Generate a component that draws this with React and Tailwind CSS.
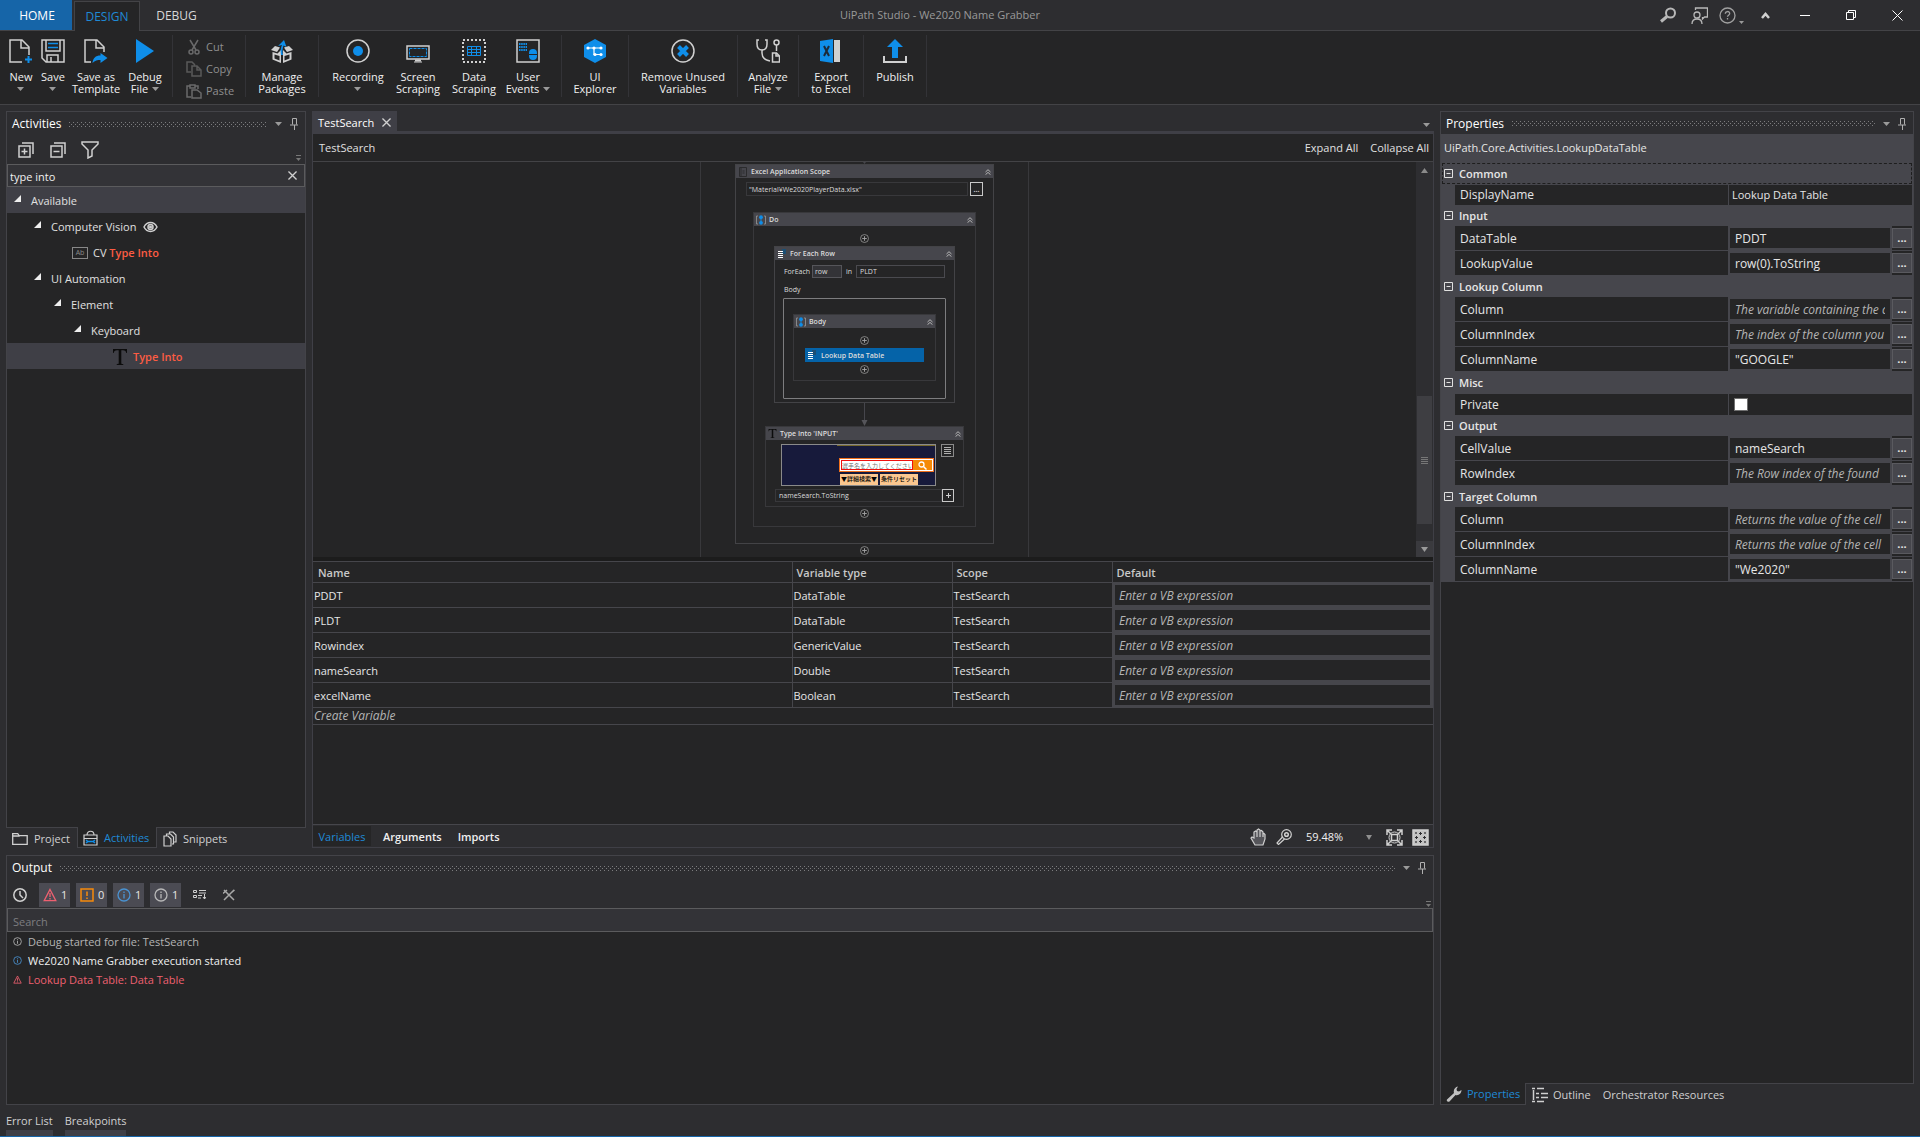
import React, { useState } from 'react';

const variables = [
  { name: 'PDDT', type: 'DataTable', scope: 'TestSearch' },
  { name: 'PLDT', type: 'DataTable', scope: 'TestSearch' },
  { name: 'Rowindex', type: 'GenericValue', scope: 'TestSearch' },
  { name: 'nameSearch', type: 'Double', scope: 'TestSearch' },
  { name: 'excelName', type: 'Boolean', scope: 'TestSearch' },
];

const propertyGroups = [
  { title: 'Common', rows: [{ name: 'DisplayName', kind: 'text', value: 'Lookup Data Table' }] },
  {
    title: 'Input',
    rows: [
      { name: 'DataTable', value: 'PDDT' },
      { name: 'LookupValue', value: 'row(0).ToString' },
    ],
  },
  {
    title: 'Lookup Column',
    rows: [
      { name: 'Column', hint: 'The variable containing the c' },
      { name: 'ColumnIndex', hint: 'The index of the column you' },
      { name: 'ColumnName', value: '"GOOGLE"' },
    ],
  },
  { title: 'Misc', rows: [{ name: 'Private', kind: 'check' }] },
  {
    title: 'Output',
    rows: [
      { name: 'CellValue', value: 'nameSearch' },
      { name: 'RowIndex', hint: 'The Row index of the found' },
    ],
  },
  {
    title: 'Target Column',
    rows: [
      { name: 'Column', hint: 'Returns the value of the cell' },
      { name: 'ColumnIndex', hint: 'Returns the value of the cell' },
      { name: 'ColumnName', value: '"We2020"' },
    ],
  },
];

/* ---------- icons ---------- */

const Svg = ({ size = 24, w, h, box, className = '', children }) => (
  <svg
    width={w ?? size}
    height={h ?? size}
    viewBox={box ?? `0 0 ${w ?? size} ${h ?? size}`}
    fill="none"
    stroke="#d0d0d0"
    strokeWidth="1.5"
    aria-hidden="true"
    className={`shrink-0 ${className}`}
  >
    {children}
  </svg>
);

const Caret = ({ className = '' }) => (
  <Svg w={7} h={4} className={className}><path d="M0 0h7L3.500 4z" fill="#9a9a9a" stroke="none" /></Svg>
);

const NewIcon = () => (
  <Svg>
    <path d="M13 23H1V1h12l7 7v8M12 1v8h8" />
    <path d="M19.500 17v7M16 20.500h7" stroke="#0f8ee9" strokeWidth="2" />
  </Svg>
);

const SaveIcon = () => (
  <Svg>
    <path d="M1 1h22v22H5l-4-4z" />
    <path d="M5 1v11h14V1" />
    <path d="M6 23v-7h11v7M10 23v-5" />
    <path d="M7 4.500h10M7 8.500h10" stroke="#0f8ee9" />
  </Svg>
);

const SaveAsIcon = () => (
  <Svg>
    <path d="M7 23H1V1h12l7 7v5M12 1v8h8" />
    <path d="M8.500 24c.5-5 3-7.500 8-7.500V14l7 5-7 5v-3c-3 0-5.500.5-8 3z" fill="#0f8ee9" stroke="none" />
  </Svg>
);

const DebugIcon = () => (
  <Svg><path d="M3 0l18 12L3 24z" fill="#0f8ee9" stroke="none" /></Svg>
);

const PackagesIcon = () => (
  <Svg>
    <path d="M1 11l4-4 5 1.500L7 13zM23 11l-4-4-5 1.500 3 4.500z" fill="#d0d0d0" stroke="none" />
    <path d="M2.500 13l5 1.500L11 11v13l-8.500-3.500zM21.500 13l-5 1.500L13 11v13l8.500-3.500z" fill="#d0d0d0" stroke="none" />
    <path d="M4.500 15.500l5 1.500v4.500l-5-2zM19.500 15.500l-5 1.500v4.500l5-2z" fill="#252526" stroke="none" />
    <path d="M11 16c-1-5 0-8 1-10L8 7l6-6 2.500 7-3-1.500c-1 3-1.500 6-.5 9.500z" fill="#0f8ee9" stroke="none" />
  </Svg>
);

const RecordIcon = () => (
  <Svg><circle cx="12" cy="12" r="11" /><circle cx="12" cy="12" r="5" fill="#0f8ee9" stroke="none" /></Svg>
);

const ScreenIcon = () => (
  <Svg>
    <rect x="1" y="7" width="22" height="13" />
    <rect x="3.500" y="9.500" width="17" height="8" stroke="#0f8ee9" strokeWidth="1" strokeDasharray="3 1" />
    <path d="M9 20.500h6v2H9z" fill="#d0d0d0" stroke="none" />
    <path d="M8 23h8" strokeWidth="1" />
  </Svg>
);

const DataIcon = () => (
  <Svg>
    <rect x="1" y="1" width="22" height="22" strokeWidth="2" strokeDasharray="2 2" />
    <path d="M5.500 7.500h13v9h-13zM5.500 10.500h13M5.500 13.500h13M9.500 7.500v9M14.500 7.500v9" stroke="#0f8ee9" strokeWidth="1" />
  </Svg>
);

const EventsIcon = () => (
  <Svg>
    <rect x="1" y="1" width="22" height="22" />
    <path d="M3 5h8M3 8h8M3 11h8" stroke="#0f8ee9" strokeWidth="2" strokeDasharray="1.500 .7" />
    <path d="M13 15v-1a4 4 0 0 1 8 0v1zM13 16h8v1a4 4 0 0 1-8 0z" fill="#0f8ee9" stroke="none" />
  </Svg>
);

const ExplorerIcon = () => (
  <Svg>
    <path d="M12 0l11 6v12l-11 6L1 18V6z" fill="#0f8ee9" stroke="none" />
    <path d="M5 9h13M11 9v6.500h7" stroke="#fff" strokeWidth="1.200" />
    <g fill="#fff" stroke="none">
      <circle cx="5" cy="9" r="1.600" /><circle cx="11" cy="9" r="1.600" /><circle cx="18" cy="9" r="1.600" />
      <circle cx="12" cy="15.500" r="1.600" /><circle cx="18" cy="15.500" r="1.600" />
    </g>
  </Svg>
);

const RemoveIcon = () => (
  <Svg><circle cx="12" cy="12" r="11" /><path d="M7.500 7.500l9 9M16.500 7.500l-9 9" stroke="#0f8ee9" strokeWidth="4" /></Svg>
);

const AnalyzeIcon = () => (
  <Svg>
    <path d="M3 1H1v4c0 4 2 6 5 6s5-2 5-6V1H9M6 11v3c0 5 3 7 8 8" />
    <circle cx="20.500" cy="3.500" r="2.500" />
    <path d="M20.500 6v6M16.500 23v-9h4l3 3v6zM20 14v3h3" />
  </Svg>
);

const ExcelIcon = () => (
  <Svg>
    <path d="M15 1h6v22h-6z" fill="#d0d0d0" stroke="none" />
    <path d="M1 2l13-2v24L1 22z" fill="#0f8ee9" stroke="none" />
    <path d="M5 7l5 10M10 7L5 17" stroke="#1c2a38" strokeWidth="2" />
  </Svg>
);

const PublishIcon = () => (
  <Svg>
    <path d="M12 0l8 8h-5v11H9V8H4z" fill="#0f8ee9" stroke="none" />
    <path d="M1 17v6h22v-6" strokeWidth="2" />
  </Svg>
);

const CutIcon = () => (
  <Svg size={16} className="opacity-40">
    <path d="M4 1l6 10M12 1L6 11" /><circle cx="5" cy="13" r="2" /><circle cx="11" cy="13" r="2" />
  </Svg>
);

const CopyIcon = () => (
  <Svg size={16} className="opacity-30">
    <path d="M5 11H1V1h5l3 3M6 5h5l4 4v6H6zM11 5v4h4" />
  </Svg>
);

const PasteIcon = () => (
  <Svg size={16} className="opacity-40">
    <path d="M5 14H1V3h3M9 3h3v3M4 2h5v3H4zM6 7h5l4 3v5H6z" />
  </Svg>
);

const PinIcon = () => (
  <Svg w={8} h={12}><path d="M2.500 6.500v-6h4v6M0 7h8M4.500 7v5" stroke="#b0b0b0" strokeWidth="1" /></Svg>
);

const CloseIcon = () => (
  <Svg size={9} box="0 0 10 10"><path d="M.5.5l9 9M9.500.5l-9 9" /></Svg>
);

const GripMenu = () => (
  <Svg w={5} h={6}><path d="M0 .5h5" stroke="#777" strokeWidth="1" /><path d="M0 3h5L2.500 6z" fill="#777" stroke="none" /></Svg>
);

const ErrorIcon = ({ size = 14 }) => (
  <Svg size={size} box="0 0 14 14">
    <path d="M7 1.500l5.800 11.200H1.200zM7 5v4M7 10v1.500" stroke="#ee6070" strokeWidth="1.300" />
  </Svg>
);

const InfoIcon = ({ size = 14, color }) => (
  <Svg size={size} box="0 0 14 14">
    <circle cx="7" cy="7" r="6" stroke={color} strokeWidth="1.300" />
    <path d="M7 3.500v1.500M7 6v4.500" stroke={color} strokeWidth="1.300" />
  </Svg>
);

const SequenceIcon = () => (
  <Svg w={10} h={10}>
    <path d="M2 1H.5v8H2M8 1h1.500v8H8" stroke="#999" strokeWidth=".8" />
    <circle cx="5" cy="2.200" r="1.900" fill="#0f8ee9" stroke="none" />
    <path d="M5 3v4" stroke="#0f8ee9" strokeWidth="1" />
    <circle cx="5" cy="7.800" r="1.900" fill="#0f8ee9" stroke="none" />
  </Svg>
);

const DataStackIcon = () => (
  <Svg w={10} h={10}>
    <path d="M5 0h4v5H5z" fill="#1c4f74" stroke="none" />
    <path d="M1 2h5v1H1zM1 4h5v1H1zM1 6h5v1H1zM1 8h5v1H1z" fill="#fff" stroke="none" />
  </Svg>
);

const TypeIcon = ({ size = 16 }) => (
  <Svg size={size} box="0 0 16 16">
    <path d="M1 0h14v4h-.7C14 2 13 1.200 11 1.200H9.300V14c0 .8.500 1.200 2 1.200V16H4.700v-.8c1.500 0 2-.4 2-1.200V1.200H5C3 1.200 2 2 1.700 4H1z" fill="#0c0c0c" stroke="none" />
  </Svg>
);

const SheetIcon = () => (
  <Svg w={10} h={10}><path d="M1.500.5h7v9h-7zM3 .5v9M4.500 4h2M4.500 6h2" stroke="#2b2b2d" strokeWidth="1" /></Svg>
);

const PlusDot = () => (
  <Svg size={9}>
    <circle cx="4.500" cy="4.500" r="4" stroke="#8a8a8a" strokeWidth=".9" />
    <path d="M4.500 2.200v4.600M2.200 4.500h4.600" stroke="#a5a5a5" strokeWidth=".9" />
  </Svg>
);

const CollapseIcon = () => (
  <Svg size={6}><path d="M.5 3L3 .7 5.500 3M.5 5.700L3 3.400l2.500 2.300" strokeWidth=".9" stroke="#c4c4c4" /></Svg>
);

/* ---------- shared parts ---------- */

const DottedGrip = ({ id }) => (
  <svg className="h-[5px] min-w-0 flex-1" aria-hidden="true">
    <defs>
      <pattern id={id} width="4" height="4" patternUnits="userSpaceOnUse">
        <rect width="1" height="1" fill="#7c7c7e" />
        <rect x="2" y="2" width="1" height="1" fill="#7c7c7e" />
      </pattern>
    </defs>
    <rect width="100%" height="5" fill={`url(#${id})`} />
  </svg>
);

const PanelTitle = ({ id, title, className = '' }) => (
  <div className={`flex shrink-0 items-center pr-[7px] pl-[5px] text-xs ${className}`}>
    <h2 className="mr-2 text-white">{title}</h2>
    <DottedGrip id={id} />
    <button aria-label={`${title} menu`} className="ml-2"><Caret /></button>
    <button aria-label={`Pin ${title}`} className="ml-2"><PinIcon /></button>
  </div>
);

const RibbonButton = ({ icon, lines, caret, className }) => (
  <button className={`flex flex-col items-center text-[#f0f0f0] ${className}`}>
    {icon}
    <span className="mt-2 flex flex-col items-center leading-[12px] whitespace-nowrap">
      <span>{lines[0]}</span>
      {(lines[1] || caret) && (
        <span className="flex h-3 items-center gap-1">
          {lines[1]}
          {caret && <Caret />}
        </span>
      )}
    </span>
  </button>
);

const RibbonGroup = ({ className = '', children }) => (
  <div className={`mt-1 flex h-[62px] border-r border-[#333337] pt-1 ${className}`}>{children}</div>
);

/* ---------- title bar + ribbon ---------- */

const TitleBar = () => (
  <header className="relative flex h-[30px] shrink-0 items-stretch text-xs">
    <nav className="flex">
      <button className="w-[72px] bg-[#1665a8] pt-px pl-[2px] text-white">HOME</button>
      <button className="relative z-10 mt-px -mb-px ml-[2px] w-[66px] border border-b-0 border-[#434346] bg-[#252526] text-[#1f8ad6]">DESIGN</button>
      <button className="mt-px w-[72px] pt-px pl-px text-[#d8d8d8]">DEBUG</button>
    </nav>
    <h1 className="flex flex-1 items-center justify-center pt-px pl-2 text-[11px] text-[#999999]">UiPath Studio - We2020 Name Grabber</h1>
    <div className="flex w-[260px] items-center">
      <button aria-label="Search">
        <Svg size={17}><circle cx="10.500" cy="6" r="4.500" strokeWidth="2" stroke="#b8b8b8" /><path d="M7 9.500L1 14.500" strokeWidth="3" stroke="#b8b8b8" /></Svg>
      </button>
      <button aria-label="Feedback" className="ml-[14px]">
        <Svg size={17}>
          <circle cx="6" cy="8" r="3" stroke="#b8b8b8" strokeWidth="1.300" />
          <path d="M1 17c0-3 2-5 5-5s5 2 5 5M4.500 3V1h12v9h-3l-2 2v-2" stroke="#b8b8b8" strokeWidth="1.300" />
        </Svg>
      </button>
      <button aria-label="Help" className="ml-[11px] flex items-end">
        <Svg size={17}>
          <circle cx="8.500" cy="8.500" r="7.500" stroke="#a0a0a0" strokeWidth="1.300" />
          <path d="M6.300 6.800c0-3 4.400-3 4.400-.2 0 1.600-2.200 1.600-2.200 3.200M8.500 11v1.500" stroke="#a0a0a0" strokeWidth="1.300" />
        </Svg>
        <Svg w={5} h={3} className="ml-[3px]"><path d="M0 0h5L2.500 3z" fill="#9a9a9a" stroke="none" /></Svg>
      </button>
      <button aria-label="Collapse ribbon" className="ml-[17px]">
        <Svg w={9} h={7}><path d="M1 6l3.500-4L8 6" strokeWidth="2.500" /></Svg>
      </button>
      <button aria-label="Minimize" className="ml-[30px]"><Svg size={10}><path d="M0 5.500h10" stroke="#fff" strokeWidth="1" /></Svg></button>
      <button aria-label="Restore" className="ml-9"><Svg size={10}><path d="M.5 2.500h7v7h-7zM2.500 2V.5h7v7H8" stroke="#fff" strokeWidth="1" /></Svg></button>
      <button aria-label="Close" className="ml-9"><Svg size={11}><path d="M.5.5l10 10M10.500.5l-10 10" stroke="#fff" strokeWidth="1" /></Svg></button>
    </div>
  </header>
);

const Ribbon = () => (
  <div className="flex h-[75px] shrink-0 border-y border-[#434346] bg-[#252526]">
    <RibbonGroup className="px-[5px]">
      <RibbonButton className="w-8" icon={<NewIcon />} lines={['New']} caret />
      <RibbonButton className="w-8" icon={<SaveIcon />} lines={['Save']} caret />
      <RibbonButton className="w-[54px]" icon={<SaveAsIcon />} lines={['Save as', 'Template']} />
      <RibbonButton className="w-[44px]" icon={<DebugIcon />} lines={['Debug', 'File']} caret />
    </RibbonGroup>
    <RibbonGroup className="w-[73px] flex-col gap-[6px] pl-[13px] text-[#8f8f8f]">
      <button className="flex h-4 items-center gap-1"><CutIcon />Cut</button>
      <button className="flex h-4 items-center gap-1"><CopyIcon />Copy</button>
      <button className="flex h-4 items-center gap-1"><PasteIcon />Paste</button>
    </RibbonGroup>
    <RibbonGroup>
      <RibbonButton className="w-[72px]" icon={<PackagesIcon />} lines={['Manage', 'Packages']} />
    </RibbonGroup>
    <RibbonGroup className="pr-[6px] pl-2">
      <RibbonButton className="w-[62px]" icon={<RecordIcon />} lines={['Recording']} caret />
      <RibbonButton className="w-[58px]" icon={<ScreenIcon />} lines={['Screen', 'Scraping']} />
      <RibbonButton className="w-[54px]" icon={<DataIcon />} lines={['Data', 'Scraping']} />
      <RibbonButton className="w-[54px]" icon={<EventsIcon />} lines={['User', 'Events']} caret />
    </RibbonGroup>
    <RibbonGroup>
      <RibbonButton className="w-[66px]" icon={<ExplorerIcon />} lines={['UI', 'Explorer']} />
    </RibbonGroup>
    <RibbonGroup>
      <RibbonButton className="w-[108px]" icon={<RemoveIcon />} lines={['Remove Unused', 'Variables']} />
    </RibbonGroup>
    <RibbonGroup>
      <RibbonButton className="w-[60px]" icon={<AnalyzeIcon />} lines={['Analyze', 'File']} caret />
    </RibbonGroup>
    <RibbonGroup>
      <RibbonButton className="w-16" icon={<ExcelIcon />} lines={['Export', 'to Excel']} />
    </RibbonGroup>
    <RibbonGroup>
      <RibbonButton className="w-[62px]" icon={<PublishIcon />} lines={['Publish']} />
    </RibbonGroup>
  </div>
);

/* ---------- activities ---------- */

const Arrow = () => (
  <Svg size={7} className="mb-[6px]"><path d="M7 0v7H0z" fill="#eee" stroke="none" /></Svg>
);

const TreeRow = ({ className = '', children }) => (
  <li className={`flex h-[26px] items-center pt-[2px] text-[#e0e0e0] ${className}`}>{children}</li>
);

const ActivitiesPanel = () => {
  const [query, setQuery] = useState('type into');

  return (
    <section className="flex w-[300px] shrink-0 flex-col">
      <div className="flex min-h-0 flex-1 flex-col border border-[#434348] bg-[#252526]">
        <div className="bg-[#2d2d30]">
          <PanelTitle id="grip-activities" title="Activities" className="h-6" />
          <div className="flex h-[28px] items-center gap-4 pl-[11px]">
            <button aria-label="Expand all">
              <Svg size={16}><path d="M1 4h11v11H1zM4 1h11v11M6.500 6.500v6M3.500 9.500h6" /></Svg>
            </button>
            <button aria-label="Collapse all">
              <Svg size={16}><path d="M1 4h11v11H1zM4 1h11v11M3.500 9.500h6" /></Svg>
            </button>
            <button aria-label="Filter" className="-ml-px">
              <Svg w={18} h={18}><path d="M1 1h16v2l-6 6v6l-4 2V9L1 3z" /></Svg>
            </button>
            <span className="mr-1 ml-auto self-end pb-[3px]"><GripMenu /></span>
          </div>
        </div>
        <div className="flex h-[23px] items-center border border-[#5b5b5d] bg-[#333337] pr-[7px]">
          <input aria-label="Search activities" value={query} onChange={(e) => setQuery(e.target.value)} className="min-w-0 flex-1 pt-[2px] pl-[2px] text-[#f0f0f0] outline-none" />
          <button aria-label="Clear search" onClick={() => setQuery('')}><CloseIcon /></button>
        </div>
        <ul>
          <TreeRow className="gap-[10px] bg-[#3f3f46] pl-[7px]"><Arrow />Available</TreeRow>
          <TreeRow className="gap-[10px] pl-[27px]">
            <Arrow />
            <span className="flex items-center gap-[7px]">
              Computer Vision
              <Svg w={15} h={12}><path d="M1 6c3-6 10-6 13 0-3 6-10 6-13 0z" /><circle cx="7.500" cy="6" r="2.500" /><circle cx="7.500" cy="6" r=".8" /></Svg>
            </span>
          </TreeRow>
          <TreeRow className="gap-[5px] pl-[65px]">
            <span className="flex h-3 w-4 items-center justify-center border border-[#888888] text-[7px] leading-[10px] text-[#8a8a8a]">Ab</span>
            <span>CV <b className="font-semibold text-[#fc5c43]">Type Into</b></span>
          </TreeRow>
          <TreeRow className="gap-[10px] pl-[27px]"><Arrow />UI Automation</TreeRow>
          <TreeRow className="gap-[10px] pl-[47px]"><Arrow />Element</TreeRow>
          <TreeRow className="gap-[10px] pl-[67px]"><Arrow />Keyboard</TreeRow>
          <TreeRow className="gap-[5px] bg-[#3f3f46] pl-[105px]">
            <TypeIcon />
            <b className="font-semibold text-[#fc5c43]">Type Into</b>
          </TreeRow>
        </ul>
      </div>
      <div className="flex h-5 text-[#d0d0d0]">
        <button className="flex w-[71px] items-center gap-[6px] pt-px pl-[6px]">
          <Svg w={16} h={12}><path d="M.7 11.300V.7h5l1.500 2h8v8.600zM.7 3h7" strokeWidth="1.300" /></Svg>Project
        </button>
        <button className="-mt-px flex w-[80px] items-center gap-[6px] border border-t-0 border-[#434348] bg-[#252526] pt-[2px] pl-[5px] text-[#1f8ad6]">
          <Svg w={15} h={16}>
            <path d="M1 5h13v10H1zM1 8.500h13M4 5c0-5 7-5 7 0" strokeWidth="1.200" />
            <path d="M3 13l2-1.500h5L12 13M3 10l2 1.500M12 10l-2 1.500" stroke="#0f8ee9" />
          </Svg>Activities
        </button>
        <button className="flex items-center gap-[6px] pt-px pl-[6px]">
          <Svg w={14} h={16}><path d="M1 5h4l3 3v7H1zM3.500 4.500V3h4l3 3v7H9M6.500 2.500V1h3.500l3 3v7h-2" strokeWidth="1.200" /></Svg>Snippets
        </button>
      </div>
    </section>
  );
};

/* ---------- designer ---------- */

const ActivityHeader = ({ icon, title }) => (
  <div className="flex h-[13px] items-center bg-[#46464c] px-[2px] font-semibold">
    {icon}
    <span className="ml-[3px] flex-1">{title}</span>
    <button aria-label={`Collapse ${title}`}><CollapseIcon /></button>
  </div>
);

const Workflow = () => (
  <div className="flex w-[329px] flex-col items-center border-x border-[#38383b] font-medium text-[7px] leading-[9px] text-[#dcdcdc]">
    <Svg w={7} h={2}><path d="M2 0h3L3.500 2z" fill="#46464c" stroke="none" /></Svg>
    <div className="flex w-[259px] flex-col border border-[#434346]">
      <ActivityHeader icon={<SheetIcon />} title="Excel Application Scope" />
      <div className="mx-[10px] mt-1 flex gap-[2px]">
        <input aria-label="Workbook path" defaultValue={'"Material¥We2020PlayerData.xlsx"'} className="h-[14px] min-w-0 flex-1 border border-[#38383b] px-[2px] outline-none" />
        <button aria-label="Browse" className="flex h-[14px] w-[13px] items-center justify-center border border-[#c8c8c8] font-bold">...</button>
      </div>

      <div className="mx-[17px] mt-4 mb-4 flex flex-col items-center border border-[#38383b]">
        <div className="w-full"><ActivityHeader icon={<SequenceIcon />} title="Do" /></div>
        <div className="mt-2 mb-[3px]"><PlusDot /></div>

        <div className="w-[181px] border border-[#434346]">
          <ActivityHeader icon={<DataStackIcon />} title="For Each Row" />
          <div className="mt-[5px] flex items-center px-[9px]">
            <label htmlFor="each-item" className="w-[28px]">ForEach</label>
            <input id="each-item" defaultValue="row" className="h-[13px] w-[30px] border border-[#55555a] bg-[#333337] px-[2px] outline-none" />
            <label htmlFor="each-source" className="w-[14px] text-center">in</label>
            <input id="each-source" defaultValue="PLDT" className="h-[13px] min-w-0 flex-1 border border-[#4a4a4f] px-[3px] outline-none" />
          </div>
          <p className="mt-[7px] px-[9px]">Body</p>
          <div className="mx-2 mt-1 mb-[3px] h-[101px] rounded-[1px] border border-[#7d7d7f] px-[9px] pt-[15px]">
            <div className="flex h-[67px] flex-col items-center border border-[#38383b]">
              <div className="w-full"><ActivityHeader icon={<SequenceIcon />} title="Body" /></div>
              <div className="mt-2"><PlusDot /></div>
              <button className="my-[3px] flex h-[14px] w-[119px] items-center gap-1 bg-[#0563a8] pl-[2px] font-semibold">
                <DataStackIcon />Lookup Data Table
              </button>
              <PlusDot />
            </div>
          </div>
        </div>

        <Svg w={7} h={23}><path d="M3.500 0v20" stroke="#46464c" strokeWidth="1" /><path d="M.5 17h6l-3 6z" fill="#55555a" stroke="none" /></Svg>

        <div className="w-[199px] border border-[#38383b]">
          <ActivityHeader icon={<TypeIcon size={9} />} title="Type Into 'INPUT'" />
          <div className="mt-1 ml-[15px] flex gap-[5px]">
            {/* captured element preview */}
            <div className="flex h-[42px] w-[155px] flex-col items-end overflow-hidden border border-[#8a8a8a] bg-[#171a3b]">
              <div className="h-px w-[98px] bg-[#77692c]" />
              <div className="mt-[12px] mr-px flex h-[14px] w-[95px] border border-[#f0701c] bg-white p-px">
                <span className="w-[72px] overflow-hidden border border-[#f01010] text-[6px] leading-[10px] font-normal whitespace-nowrap text-[#777777]">選手名を入力してください</span>
                <span className="flex flex-1 items-center justify-center bg-[#f58a07]">
                  <Svg size={9}><circle cx="3.500" cy="3.500" r="2.500" stroke="#fff" strokeWidth="1.300" /><path d="M5.500 5.500l3 3" stroke="#fff" /></Svg>
                </span>
              </div>
              <div className="mt-[2px] mr-[17px] flex gap-[2px] text-center text-[6px] leading-[11px] whitespace-nowrap text-black">
                <span className="h-[11px] w-[38px] overflow-hidden bg-[#fbc78f]">▼詳細検索▼</span>
                <span className="h-[11px] w-[38px] overflow-hidden bg-[#fbc78f]">条件リセット</span>
              </div>
            </div>
            <button aria-label="Options" className="flex h-[13px] w-[13px] items-center justify-center border border-[#8a8a8a]">
              <Svg size={7}><path d="M0 .5h7M0 2.500h7M0 4.500h7M0 6.500h7" strokeWidth="1" stroke="#b0b0b0" /></Svg>
            </button>
          </div>
          <div className="mt-[3px] mb-1 ml-[9px] flex">
            <input aria-label="Text to type" defaultValue="nameSearch.ToString" className="h-[13px] w-[167px] border border-[#38383b] px-[3px] outline-none" />
            <button aria-label="Add key" className="flex h-[13px] w-[12px] items-center justify-center border border-[#c8c8c8]">
              <Svg size={5}><path d="M2.500 0v5M0 2.500h5" strokeWidth="1" /></Svg>
            </button>
          </div>
        </div>
        <div className="mt-[2px] mb-2"><PlusDot /></div>
      </div>
    </div>
    <div className="mt-[2px]"><PlusDot /></div>
  </div>
);

const Designer = () => (
  <>
    <div className="flex h-5 shrink-0 items-stretch justify-between">
      <button className="flex w-[85px] items-center gap-2 bg-[#3f3f46] pt-[3px] pl-[6px] text-white">TestSearch<CloseIcon /></button>
      <button aria-label="Open documents" className="mt-2 mr-1"><Caret /></button>
    </div>
    <div className="flex min-h-0 flex-1 flex-col border-x border-t-3 border-[#3f3f46] bg-[#252526]">
      <div className="flex h-[28px] shrink-0 items-center gap-3 border-b border-[#434346] pt-px pr-1 pl-[6px] text-[#e0e0e0]">
        <span className="flex-1">TestSearch</span>
        <button>Expand All</button>
        <button>Collapse All</button>
      </div>
      <div className="flex min-h-0 flex-1">
        <div className="flex min-w-0 flex-1 justify-center overflow-hidden"><Workflow /></div>
        <div className="flex w-[17px] flex-col items-center bg-[#2e2e31]">
          <button aria-label="Scroll up" className="flex h-4 items-center"><Svg w={7} h={5}><path d="M0 5h7L3.500 0z" fill="#8a8a8a" stroke="none" /></Svg></button>
          <div className="flex-[218]" />
          <div className="flex w-[15px] flex-[128] items-center justify-center bg-[#3e3e42]">
            <Svg size={7}><path d="M0 .5h7M0 2.500h7M0 4.500h7M0 6.500h7" stroke="#777" strokeWidth="1" /></Svg>
          </div>
          <div className="flex-[17]" />
          <button aria-label="Scroll down" className="flex h-4 w-full items-center justify-center bg-[#3a3a3e]"><Svg w={7} h={5}><path d="M0 0h7L3.500 5z" fill="#9a9a9a" stroke="none" /></Svg></button>
        </div>
      </div>
    </div>
  </>
);

const VariablesPanel = () => (
  <div className="flex h-[291px] shrink-0 flex-col border-x border-b border-[#3f3f46]">
    <div className="h-[4px] shrink-0 bg-[#1c1c1c]" />
    <div className="min-h-0 flex-1 border-b border-[#46464b] bg-[#252526]">
      <table className="w-full table-fixed border-collapse text-left text-[#e6e6e6]">
        <thead>
          <tr className="h-[21px] border-y border-[#46464b] text-[#c8c8c8]">
            <th className="pt-[2px] pl-[5px] font-semibold">Name</th>
            <th className="w-[160px] border-l border-[#46464b] pt-[2px] pl-1 font-semibold">Variable type</th>
            <th className="w-[160px] border-l border-[#46464b] pt-[2px] pl-1 font-semibold">Scope</th>
            <th className="w-[321px] border-l border-[#46464b] pt-[2px] pl-1 font-semibold">Default</th>
          </tr>
        </thead>
        <tbody>
          {variables.map((v) => (
            <tr key={v.name} className="h-[25px] border-b border-[#46464b]">
              <td className="pt-[2px] pl-px">{v.name}</td>
              <td className="border-l border-[#46464b] pt-[2px] pl-px">{v.type}</td>
              <td className="border-l border-[#46464b] pt-[2px] pl-px">{v.scope}</td>
              <td className="bg-[#46464b] p-0 px-[3px]">
                <input aria-label={`Default value of ${v.name}`} placeholder="Enter a VB expression" className="block h-5 w-full bg-[#252526] px-1 text-xs italic outline-none placeholder:text-[#b4b4b4]" />
              </td>
            </tr>
          ))}
          <tr className="h-[17px] border-b border-[#46464b]">
            <td colSpan={4} className="pl-px text-xs text-[#b4b4b4] italic">Create Variable</td>
          </tr>
        </tbody>
      </table>
    </div>
    <div className="flex h-[22px] shrink-0 items-center pt-[2px] text-[#f0f0f0]">
      <button className="-mt-[2px] h-full w-[58px] bg-[#252526] pt-px text-[#1f8ad6]">Variables</button>
      <button className="ml-3 font-semibold">Arguments</button>
      <button className="ml-4 font-semibold">Imports</button>
      <div className="mr-1 ml-auto flex items-center">
        <button aria-label="Pan">
          <Svg w={16} h={18}><path d="M5 17l-4-7 1-1 2 1V4l1.500-1L7 4V2l1.500-1L10 2v1l1.500-.5L13 4v2l1-.5 1 1V11l-2 6zM7 4v5M10 3v6M13 5v4" strokeWidth="1.200" fill="#55555a" /></Svg>
        </button>
        <button aria-label="Reset zoom" className="ml-[10px]">
          <Svg w={16} h={16}><circle cx="10.500" cy="5.500" r="4.800" strokeWidth="1.200" /><circle cx="10.500" cy="5.500" r="1.800" /><path d="M6.500 8L1 14l1.500 1.500L8.500 10" strokeWidth="1.200" /></Svg>
        </button>
        <div className="ml-[14px] flex items-center">
          <select aria-label="Zoom level" className="h-5 w-[60px] appearance-none outline-none"><option>59.48%</option></select>
          <Svg w={6} h={5}><path d="M0 0h6L3 5z" fill="#8f8f8f" stroke="none" /></Svg>
        </div>
        <button aria-label="Fit to screen" className="ml-[14px]">
          <Svg size={17}><path d="M1 6V1h5M11 1h5v5M16 11v5h-5M6 16H1v-5M1 1l4 4M16 1l-4 4M16 16l-4-4M1 16l4-4" /><rect x="5.500" y="5.500" width="6" height="6" /><circle cx="8.500" cy="8.500" r="5.500" strokeWidth="1" /></Svg>
        </button>
        <button aria-label="Overview" className="ml-[9px]">
          <Svg size={17}>
            <path d="M1 1h15v15H1z" fill="#c4c4c4" />
            <path d="M8.500 3v3M8.500 11v3M3 8.500h3M11 8.500h3M7 4.500h3M7 12.500h3M4.500 7v3M12.500 7v3" stroke="#2d2d30" strokeWidth="1" />
            <path d="M3 3h2v2H3zM12 3h2v2h-2zM3 12h2v2H3zM12 12h2v2h-2z" fill="#6a6a6c" stroke="none" />
          </Svg>
        </button>
      </div>
    </div>
  </div>
);

/* ---------- output ---------- */

const LevelToggle = ({ label, icon, count }) => (
  <button aria-label={`${label}: ${count}`} className="flex h-6 w-[31px] items-center gap-1 bg-[#4b4b53] pl-1">{icon}{count}</button>
);

const OutputPanel = () => (
  <section className="flex h-[250px] shrink-0 flex-col border border-[#434348] bg-[#252526]">
    <div className="bg-[#2d2d30]">
      <PanelTitle id="grip-output" title="Output" className="h-[25px] pb-px" />
      <div className="flex h-[27px] items-center pt-px pl-[6px] text-[#e6e6e6]">
        <button aria-label="Timestamps"><Svg size={14}><circle cx="7" cy="7" r="6.200" /><path d="M7 3v4l3 3" /></Svg></button>
        <div className="ml-3 flex gap-[6px]">
          <LevelToggle label="Errors" count={1} icon={<ErrorIcon />} />
          <LevelToggle
            label="Warnings"
            count={0}
            icon={<Svg size={14}><path d="M1 1h12v12H1z" stroke="#f78b0b" /><path d="M7 3.500v4.500M7 9.500V11" stroke="#f78b0b" /></Svg>}
          />
          <LevelToggle label="Info" count={1} icon={<InfoIcon color="#4a93d2" />} />
          <LevelToggle label="Trace" count={1} icon={<InfoIcon color="#b8b8b8" />} />
        </div>
        <button aria-label="Wrap lines" className="ml-3">
          <Svg w={13} h={12}><path d="M.5 1.500h3v2h-3zM.5 6.500h3v2h-3zM6 1.500h7M6 4h7M5 6.500h4M5 9h3M11.500 5v5M10 8l1.500 2L13 8" strokeWidth="1" /></Svg>
        </button>
        <button aria-label="Clear all" className="ml-[17px]">
          <Svg w={12} h={12}><path d="M1 1l10 10M11 1L1 11M0 4.500L4 1M8 4l3.500-3" strokeWidth="1.500" stroke="#a8a8a8" /></Svg>
        </button>
        <span className="mr-[2px] ml-auto self-end pb-px"><GripMenu /></span>
      </div>
    </div>
    <input aria-label="Search output" placeholder="Search" className="h-6 shrink-0 border border-[#5b5b5d] bg-[#333337] px-[5px] pt-[2px] outline-none placeholder:text-[#7d7d80]" />
    <ul className="leading-[19px]">
      <li className="flex items-center gap-[6px] pl-[6px] text-[#b4b4b4]"><InfoIcon size={9} color="#b8b8b8" />Debug started for file: TestSearch</li>
      <li className="flex items-center gap-[6px] pl-[6px] text-[#f0f0f0]"><InfoIcon size={9} color="#4a93d2" />We2020 Name Grabber execution started</li>
      <li className="flex items-center gap-[6px] pl-[6px] text-[#ee6070]"><ErrorIcon size={9} />Lookup Data Table: Data Table</li>
    </ul>
  </section>
);

/* ---------- properties ---------- */

const PropertyRow = ({ id, row }) => {
  if (row.kind) {
    return (
      <div className={`flex border-t border-[#46464c] text-xs ${row.kind === 'check' ? 'h-[22px]' : 'h-[21px]'}`}>
        <label htmlFor={id} className="flex w-[273px] items-center bg-[#252526] pl-[5px]">{row.name}</label>
        <div className="ml-px flex flex-1 items-center bg-[#252526] px-[3px]">
          {row.kind === 'check'
            ? <input id={id} type="checkbox" className="ml-[2px] h-[13px] w-[14px] appearance-none border border-[#707070] bg-white" />
            : <input id={id} defaultValue={row.value} className="min-w-0 flex-1 text-[11px] outline-none" />}
        </div>
      </div>
    );
  }
  return (
    <div className="flex h-[25px] border-b border-[#46464c] text-xs">
      <label htmlFor={id} className="flex w-[273px] items-center bg-[#252526] pt-[2px] pl-[5px]">{row.name}</label>
      <input
        id={id}
        defaultValue={row.value}
        placeholder={row.hint}
        className="mx-[2px] my-[2px] min-w-0 flex-1 bg-[#252526] px-[5px] pt-px outline-none placeholder:text-[#b4b4b4] placeholder:italic"
      />
      <div className="w-5 bg-[#252526] py-[2px]">
        <button aria-label={`Edit ${row.name}`} className="flex h-5 w-full items-center justify-center border border-[#5a5a5f] bg-[#46464c] text-[11px] font-bold">...</button>
      </div>
    </div>
  );
};

const PropertiesPanel = () => (
  <section className="flex w-[474px] shrink-0 flex-col">
    <div className="flex min-h-0 flex-1 flex-col border border-[#434348] bg-[#252526]">
      <PanelTitle id="grip-properties" title="Properties" className="h-[22px] bg-[#2d2d30] pt-px" />
      <div className="bg-[#46464c] text-[#e6e6e6]">
        <p className="flex h-[29px] items-center pb-px pl-[3px]">UiPath.Core.Activities.LookupDataTable</p>
        {propertyGroups.map((group, i) => (
          <div key={group.title}>
            <h3 className={`mx-px flex h-[21px] items-center gap-[6px] font-semibold ${i === 0 ? 'border border-dashed border-[#1e1e1e] pl-px' : 'pl-[2px]'}`}>
              <Svg size={9}><path d="M.5.5h8v8h-8zM2.500 4.500h4" strokeWidth="1" stroke="#e0e0e0" /></Svg>
              {group.title}
            </h3>
            <div className="mr-px ml-[14px]">
              {group.rows.map((row) => <PropertyRow key={row.name} id={`${group.title}-${row.name}`.replace(' ', '-')} row={row} />)}
            </div>
          </div>
        ))}
      </div>
    </div>
    <div className="flex h-[21px] text-[#d0d0d0]">
      <button className="-mt-px flex w-[86px] items-center gap-[5px] border border-t-0 border-[#434348] bg-[#252526] pt-px pl-[5px] text-[#1f8ad6]">
        <Svg size={16}><path d="M1 13.500L8 7c-1-3 1-6 4-6.500L10.500 3l.5 2 2 .5L15.500 4c0 3.500-3 6-6 5l-6 6.500c-1.500 1-3.500-.5-2.500-2z" fill="#c0c0c0" stroke="none" /></Svg>Properties
      </button>
      <button className="flex items-center gap-[5px] pl-[6px]">
        <Svg size={16}><path d="M0 1.500h3M5 1.500h7M4 6.500h3M9 6.500h7M4 10.500h3M9 10.500h7M0 14.500h3M5 14.500h7M1.500 3v10" /></Svg>Outline
      </button>
      <button className="ml-3">Orchestrator Resources</button>
    </div>
  </section>
);

const App = () => (
  <div className="flex h-screen flex-col overflow-hidden border-b border-[#1665a8] bg-[#2d2d30] font-['Open_Sans','Noto_Sans_CJK_JP',sans-serif] text-[11px] leading-4">
    <TitleBar />
    <Ribbon />
    <main className="flex min-h-0 flex-1 gap-[6px] px-[6px] pt-[6px]">
      <div className="flex min-w-0 flex-1 flex-col gap-[7px]">
        <div className="flex min-h-0 flex-1 gap-[6px]">
          <ActivitiesPanel />
          <section className="flex min-w-0 flex-1 flex-col">
            <Designer />
            <VariablesPanel />
          </section>
        </div>
        <OutputPanel />
      </div>
      <PropertiesPanel />
    </main>
    <footer className="flex h-[31px] shrink-0 items-end gap-3 px-[6px] text-[#d0d0d0]">
      <button className="border-b-6 border-[#3f3f46] pb-px">Error List</button>
      <button className="border-b-6 border-[#3f3f46] pb-px">Breakpoints</button>
    </footer>
  </div>
);

export default App;
